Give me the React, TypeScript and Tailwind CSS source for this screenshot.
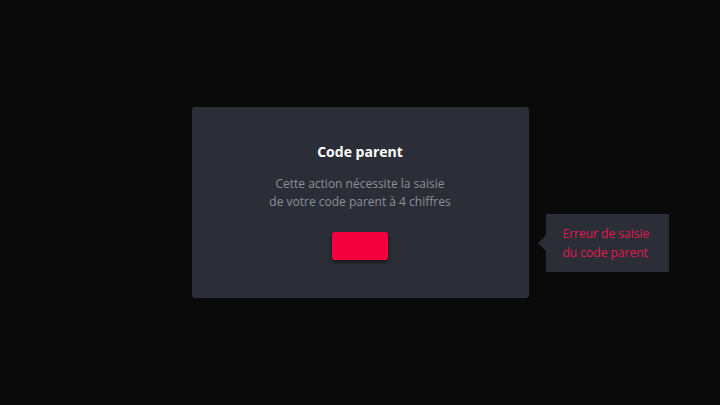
export default function App() {
  return (
    <div
      className="flex h-[405px] w-full items-center justify-center bg-[#0a0a0b]"
      style={{ fontFamily: '"Open Sans", "Noto Sans", sans-serif' }}
    >
      <div className="relative">
        <div className="flex w-[337px] flex-col items-center rounded-[3px] bg-[#2b2e37] pt-[35px] pb-[38px]">
          <h1 className="text-[14px] font-bold leading-[20px] text-white">Code parent</h1>
          <p className="mt-[13px] text-center text-[12px] leading-[18px] text-[#8c8f97]">
            Cette action nécessite la saisie
            <br />
            de votre code parent à 4 chiffres
          </p>
          <button className="mt-[21px] h-[28px] w-[56px] rounded-[2px] bg-[#f5003f] shadow-[0_2px_4px_rgba(0,0,0,0.5)]" />
        </div>

        <div className="absolute left-full top-[107px] ml-[17px] w-[123px] bg-[#2b2e37] px-[17px] pt-[10px] pb-[10px] text-[12px] leading-[19px] text-[#e5174f]">
          <span className="absolute left-[-8px] top-[21px] h-0 w-0 border-y-[8px] border-r-[8px] border-y-transparent border-r-[#2b2e37]" />
          Erreur de saisie
          <br />
          du code parent
        </div>
      </div>
    </div>
  );
}
